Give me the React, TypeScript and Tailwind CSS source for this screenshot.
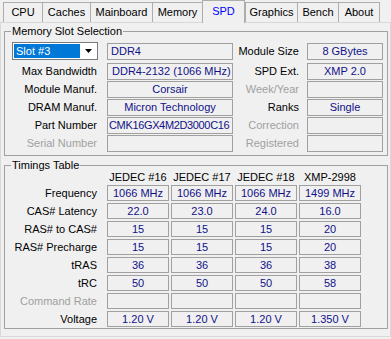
import React from "react";

const tabs: { name: string; w: string; sel?: boolean }[] = [
  { name: "CPU", w: "w-[39px]" },
  { name: "Caches", w: "w-[48px]" },
  { name: "Mainboard", w: "w-[62px]" },
  { name: "Memory", w: "w-[50px]" },
  { name: "SPD", w: "w-[43px]", sel: true },
  { name: "Graphics", w: "w-[52px]" },
  { name: "Bench", w: "w-[41px]" },
  { name: "About", w: "w-[42px]" },
];

function Box({
  children,
  w,
  align = "center",
  h = "h-[17px]",
  pad = "pl-[3px]",
}: {
  children?: React.ReactNode;
  w: string;
  align?: "center" | "left";
  h?: string;
  pad?: string;
}) {
  return (
    <div
      className={`${w} ${h} shrink-0 border border-[#a0a0a0] flex items-center ${
        align === "center" ? "justify-center" : `justify-start ${pad}`
      } text-[#10108a] whitespace-nowrap overflow-hidden`}
    >
      {children}
    </div>
  );
}

function Label({
  children,
  w,
  dim,
}: {
  children: React.ReactNode;
  w: string;
  dim?: boolean;
}) {
  return (
    <div
      className={`${w} shrink-0 text-right whitespace-nowrap ${
        dim ? "text-[#a0a0a0]" : "text-black"
      }`}
    >
      {children}
    </div>
  );
}

const slotRows: [string, React.ReactNode, "center" | "left", boolean, string, string, boolean, string][] = [
  ["Max Bandwidth", "DDR4-2132 (1066 MHz)", "left", false, "SPD Ext.", "XMP 2.0", false, "pl-[4px]"],
  ["Module Manuf.", "Corsair", "center", false, "Week/Year", "", true, "pl-[3px]"],
  ["DRAM Manuf.", "Micron Technology", "center", false, "Ranks", "Single", false, "pl-[3px]"],
  [
    "Part Number",
    <span className="tracking-[-0.35px]">CMK16GX4M2D3000C16</span>,
    "left",
    false,
    "Correction",
    "",
    true,
    "pl-[1px]",
  ],
  ["Serial Number", "", "left", true, "Registered", "", true, "pl-[3px]"],
];

const timingRows: { label: string; dim?: boolean; vals: string[] }[] = [
  { label: "Frequency", vals: ["1066 MHz", "1066 MHz", "1066 MHz", "1499 MHz"] },
  { label: "CAS# Latency", vals: ["22.0", "23.0", "24.0", "16.0"] },
  { label: "RAS# to CAS#", vals: ["15", "15", "15", "20"] },
  { label: "RAS# Precharge", vals: ["15", "15", "15", "20"] },
  { label: "tRAS", vals: ["36", "36", "36", "38"] },
  { label: "tRC", vals: ["50", "50", "50", "58"] },
  { label: "Command Rate", dim: true, vals: ["", "", "", ""] },
  { label: "Voltage", vals: ["1.20 V", "1.20 V", "1.20 V", "1.350 V"] },
];

const headers = ["JEDEC #16", "JEDEC #17", "JEDEC #18", "XMP-2998"];

export default function App() {
  return (
    <div className="w-[391px] h-[339px] bg-[#f0f0f0] overflow-hidden font-['Liberation_Sans',Arial,sans-serif] text-[11px] leading-[13px] text-black">
      {/* Tab bar */}
      <div className="h-[22px] flex items-end pl-[3px]">
        {tabs.map((t, i) => (
          <div
            key={t.name}
            className={`${t.w} shrink-0 flex items-center justify-center border-t border-l border-[#adadad] ${
              t.sel
                ? "h-[23px] -mb-px relative z-10 border-r bg-[#f0f0f0] text-[#0000ff] pb-[2px]"
                : "h-[20px] bg-[#f0f0f0]"
            } ${i === tabs.length - 1 ? "border-r" : ""}`}
          >
            {t.name}
          </div>
        ))}
      </div>

      {/* Panel */}
      <div className="h-[315px] border border-[#d9d9d9] pl-[3px]">
        {/* Memory Slot Selection */}
        <fieldset className="mt-[2px] w-[384px] border border-[#a0a0a0] pt-[4px] pb-[3px] px-0 m-0">
          <legend className="ml-[6px] px-[1px] leading-[13px]">Memory Slot Selection</legend>

          <div className="flex items-center h-[18px]">
            <div className="ml-[7px] w-[86px] h-[18px] shrink-0 border border-[#7a7a7a] bg-white p-[1px] flex">
              <div className="w-[66px] bg-[#0078d7] text-white pl-[2px] leading-[14px]">Slot #3</div>
              <div className="flex-1 flex items-center justify-center">
                <svg width="7" height="4" viewBox="0 0 7 4">
                  <polygon points="0,0 7,0 3.5,4" fill="#000" />
                </svg>
              </div>
            </div>
            <div className="ml-[9px]">
              <Box w="w-[126px]" align="left">
                DDR4
              </Box>
            </div>
            <Label w="w-[66px]">Module Size</Label>
            <div className="ml-[8px]">
              <Box w="w-[76px]">8 GBytes</Box>
            </div>
          </div>

          <div className="mt-[3px] flex flex-col gap-[1px]">
            {slotRows.map(([l, v, a, ld, rl, rv, rd, pad]) => (
              <div key={l} className="flex items-center h-[17px]">
                <Label w="w-[92px]" dim={ld}>
                  {l}
                </Label>
                <div className="ml-[10px]">
                  <Box w="w-[126px]" align={a} pad={pad}>
                    {v}
                  </Box>
                </div>
                <Label w="w-[66px]" dim={rd}>
                  {rl}
                </Label>
                <div className="ml-[8px]">
                  <Box w="w-[76px]">{rv}</Box>
                </div>
              </div>
            ))}
          </div>
        </fieldset>

        {/* Timings Table */}
        <fieldset className="mt-[3px] w-[384px] border border-[#a0a0a0] pt-0 pb-[1px] px-0 m-0">
          <legend className="ml-[6px] px-[1px] leading-[13px]">Timings Table</legend>

          <div className="flex h-[11px] items-center">
            <div className="w-[92px] shrink-0" />
            <div className="ml-[10px] flex gap-[2px]">
              {headers.map((h) => (
                <div key={h} className="w-[62px] text-center whitespace-nowrap leading-[11px]">
                  {h}
                </div>
              ))}
            </div>
          </div>

          <div className="mt-[2px] flex flex-col gap-[2px]">
            {timingRows.map((r) => (
              <div key={r.label} className="flex items-center h-[16px]">
                <Label w="w-[92px]" dim={r.dim}>
                  {r.label}
                </Label>
                <div className="ml-[10px] flex gap-[2px]">
                  {r.vals.map((v, i) => (
                    <Box key={i} w="w-[62px]" h="h-[16px]">
                      {v}
                    </Box>
                  ))}
                </div>
              </div>
            ))}
          </div>
        </fieldset>
      </div>
    </div>
  );
}
